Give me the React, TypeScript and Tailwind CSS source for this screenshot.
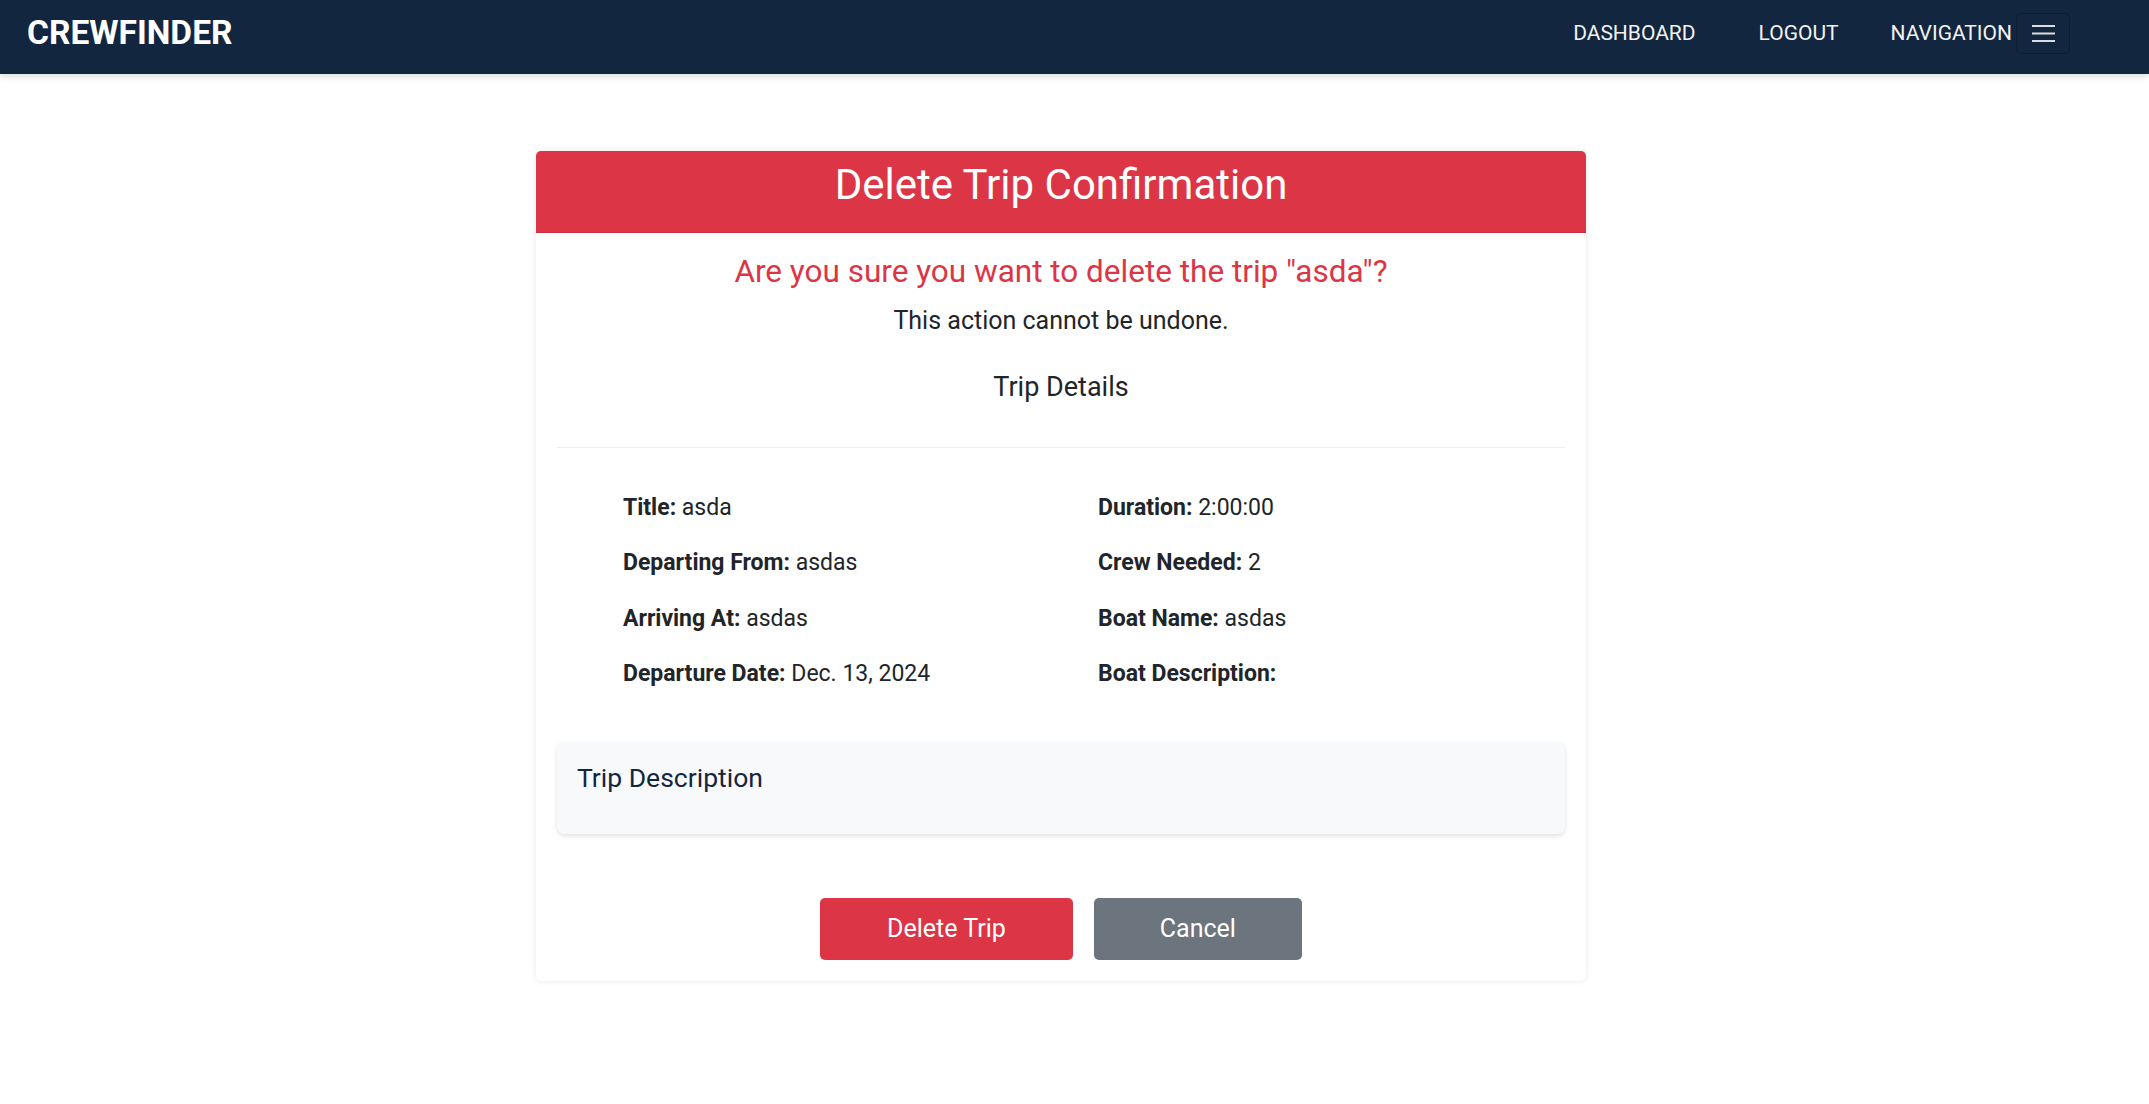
const tripDetails: { label: string; value: string }[] = [
  { label: 'Title:', value: 'asda' },
  { label: 'Duration:', value: '2:00:00' },
  { label: 'Departing From:', value: 'asdas' },
  { label: 'Crew Needed:', value: '2' },
  { label: 'Arriving At:', value: 'asdas' },
  { label: 'Boat Name:', value: 'asdas' },
  { label: 'Departure Date:', value: 'Dec. 13, 2024' },
  { label: 'Boat Description:', value: '' },
];

function Navbar() {
  return (
    <header className="h-[74px] bg-[#12263f] flex items-center pl-[27px] pr-[79px] pb-[8px] shadow-[0_3px_6px_rgba(0,0,0,0.12)] relative z-10">
      <a className="text-[33.5px] font-bold text-white leading-none cursor-pointer">CREWFINDER</a>

      <div className="ml-auto flex items-center text-[21px] leading-none text-[#f2f2f2]">
        <a className="cursor-pointer">DASHBOARD</a>
        <a className="ml-[63px] cursor-pointer">LOGOUT</a>
        <div className="ml-[52px] flex items-center">
          <span>NAVIGATION</span>
          {/* Hamburger toggler */}
          <button className="ml-[4px] w-[54px] h-[41px] flex items-center justify-center rounded-[5px] border border-[#0d1e32] cursor-pointer">
            <svg width="23" height="17" viewBox="0 0 23 17" fill="none">
              <line x1="0" y1="1" x2="23" y2="1" stroke="#d9dce0" strokeWidth="2" />
              <line x1="0" y1="8.5" x2="23" y2="8.5" stroke="#d9dce0" strokeWidth="2" />
              <line x1="0" y1="16" x2="23" y2="16" stroke="#d9dce0" strokeWidth="2" />
            </svg>
          </button>
        </div>
      </div>
    </header>
  );
}

export default function App() {
  return (
    <div className="min-h-screen bg-white font-['Roboto','Liberation_Sans',sans-serif] text-[#212529]">
      <Navbar />

      <main className="flex justify-center pt-[77px] pr-[27px] pb-[60px]">
        <div className="w-[1050px] bg-white rounded-[5px] shadow-[0_0_6px_rgba(0,0,0,0.09)]">
          {/* Card header */}
          <div className="h-[82px] bg-[#dc3545] rounded-t-[5px] border-b border-[#c9303f] pt-[9px] text-center">
            <h2 className="text-[42px] leading-[50px] text-white">Delete Trip Confirmation</h2>
          </div>

          {/* Card body */}
          <div className="px-[21px] pt-[21px] pb-[21px]">
            <p className="text-center text-[31.5px] leading-[36px] text-[#dc3545]">
              Are you sure you want to delete the trip "asda"?
            </p>
            <p className="mt-[12px] text-center text-[25px] leading-[37.5px]">This action cannot be undone.</p>
            <h5 className="mt-[32px] text-center text-[27px] leading-[31px]">Trip Details</h5>

            <hr className="mt-[44px] border-[#eeeeee]" />

            <div className="mt-[43px] grid grid-cols-2 gap-y-[21px] px-[29px]">
              {tripDetails.map((item) => (
                <p key={item.label} className="pl-[37px] text-[23px] leading-[34.5px]">
                  <strong className="font-bold">{item.label}</strong> {item.value}
                </p>
              ))}
            </div>

            {/* Trip description box */}
            <div className="mt-[50px] bg-[#f8f9fa] rounded-[8px] shadow-[0_2px_5px_rgba(0,0,0,0.12)] pt-[20px] pb-[41px] px-[20px]">
              <h5 className="text-[26.5px] leading-[31px] text-[#12263f]">Trip Description</h5>
            </div>

            <div className="mt-[64px] flex justify-center gap-[21px]">
              <button className="h-[62px] px-[67px] rounded-[5px] bg-[#dc3545] text-white text-[25px] leading-[37.5px] cursor-pointer">
                Delete Trip
              </button>
              <button className="h-[62px] px-[66px] rounded-[5px] bg-[#6c757d] text-white text-[25px] leading-[37.5px] cursor-pointer">
                Cancel
              </button>
            </div>
          </div>
        </div>
      </main>
    </div>
  );
}
